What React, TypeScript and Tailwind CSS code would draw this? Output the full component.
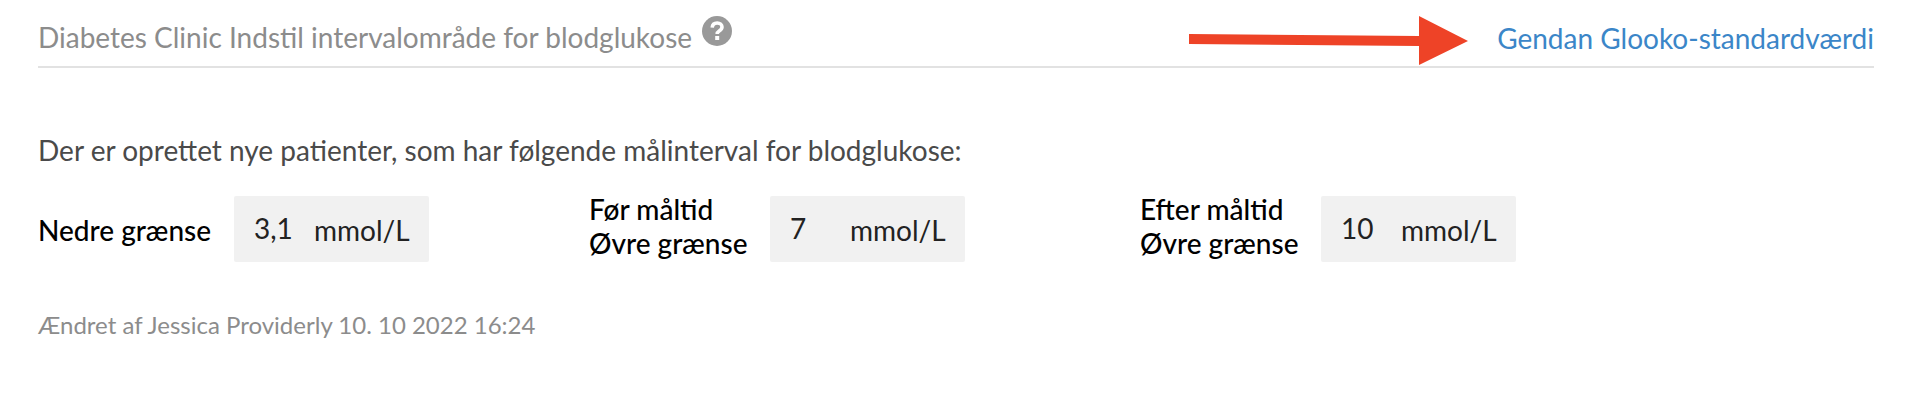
function RangeBox({ value }: { value: string }) {
  return (
    <div className="flex h-[66px] w-[195px] items-center rounded-[2px] bg-[#f1f1f1] text-[28px] text-[#222]">
      <span className="w-[80px] pl-[20px] pb-[2px]">{value}</span>
      <span className="pt-[1px]">mmol/L</span>
    </div>
  );
}

function HelpIcon() {
  return (
    <svg className="ml-[10px] mt-[-3px]" width="30" height="30" viewBox="0 0 30 30">
      <circle cx="15" cy="15" r="15" fill="#999" />
      <path d="M10.2 11.6 C10.4 8.6 12.4 7 15.2 7 C18 7 20 8.7 20 11 C20 13 18.8 14 17.2 15 C15.8 15.9 15.2 16.6 15.2 18" fill="none" stroke="#fff" strokeWidth="3.6" />
      <rect x="13.2" y="20" width="4" height="4" fill="#fff" />
    </svg>
  );
}

export default function App() {
  return (
    <div className="relative h-[400px] w-[1912px] overflow-hidden bg-white px-[38px] font-['Lato',sans-serif]">
      {/* header */}
      <div className="flex h-[68px] items-start justify-between border-b-2 border-[#e2e2e2]">
        <div className="flex items-start pt-[19px] text-[28px] leading-[36px] text-[#8c8c8c]">
          <span>Diabetes Clinic Indstil intervalområde for blodglukose</span>
          <HelpIcon />
        </div>
        <a className="pt-[20px] text-[28px] leading-[36px] text-[#3b86c8]">Gendan Glooko-standardværdi</a>
      </div>

      <p className="mt-[64px] text-[28px] leading-[36px] text-[#4a4a4a]">
        Der er oprettet nye patienter, som har følgende målinterval for blodglukose:
      </p>

      <div className="mt-[28px] flex items-center">
        <div className="flex w-[551px] items-center">
          <div className="mt-[2px] w-[196px] text-[28px] font-medium text-black">Nedre grænse</div>
          <RangeBox value="3,1" />
        </div>
        <div className="flex w-[551px] items-center">
          <div className="mt-[-6px] w-[181px] text-[28px] leading-[34px] font-medium text-black">
            Før måltid
            <br />
            Øvre grænse
          </div>
          <RangeBox value="7" />
        </div>
        <div className="flex items-center">
          <div className="mt-[-6px] w-[181px] text-[28px] leading-[34px] font-medium text-black">
            Efter måltid
            <br />
            Øvre grænse
          </div>
          <RangeBox value="10" />
        </div>
      </div>

      <p className="mt-[48px] text-[24px] leading-[30px] text-[#8c8c8c]">Ændret af Jessica Providerly 10. 10 2022 16:24</p>

      {/* annotation arrow */}
      <svg className="absolute left-[1189px] top-[16px]" width="280" height="50" viewBox="0 0 280 50">
        <path d="M0 18 L230 20 L230 0 L279 25 L230 49 L230 30 L0 28 Z" fill="#ee4327" />
      </svg>
    </div>
  );
}
